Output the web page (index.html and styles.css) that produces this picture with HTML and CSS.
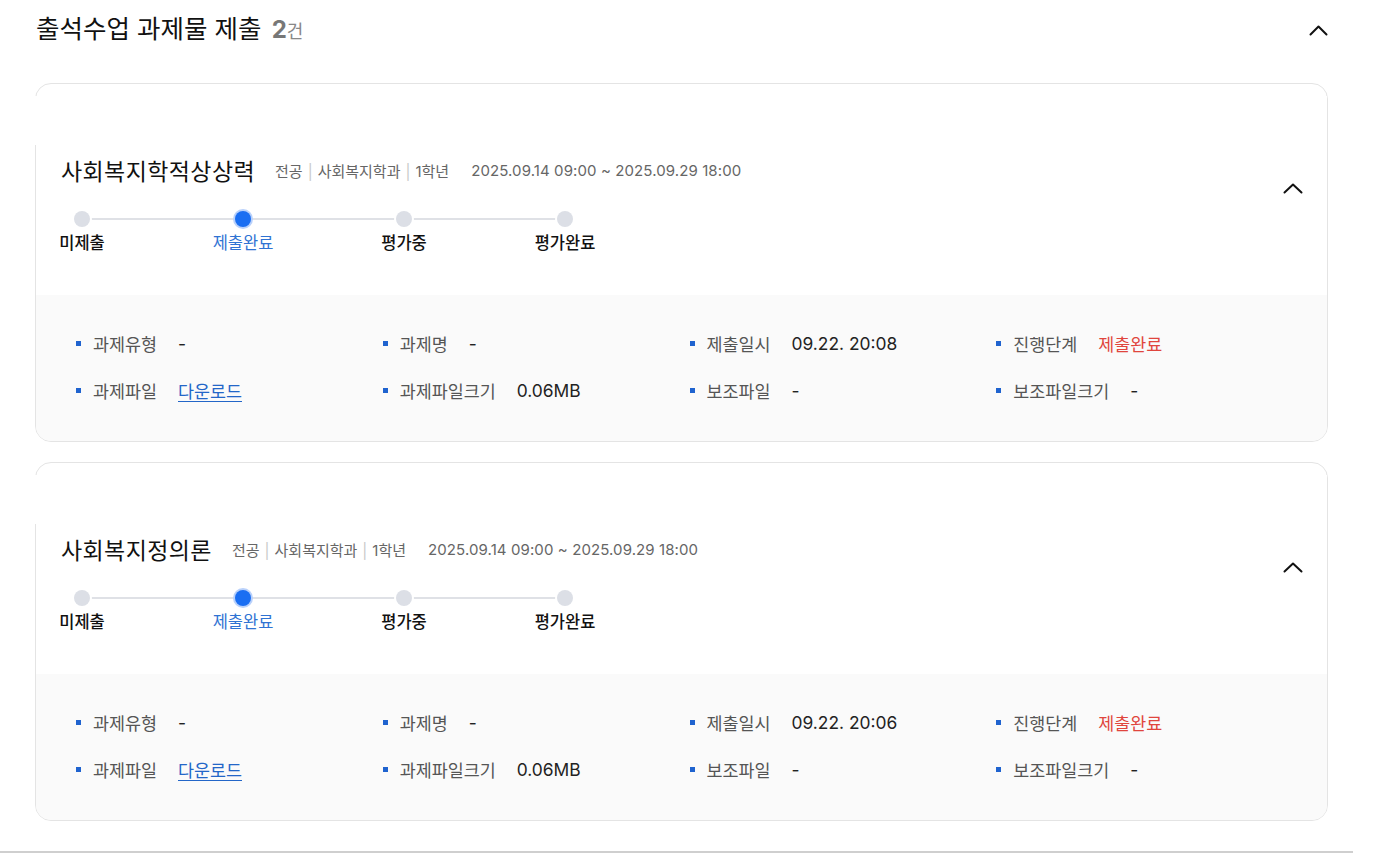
FILE: index.html
```html
<!DOCTYPE html>
<html lang="ko">
<head>
<meta charset="utf-8">
<title>출석수업 과제물 제출</title>
<link rel="stylesheet" href="styles.css">
</head>
<body>
<div class="page">
  <div class="section-head">
    <h2 class="section-title">출석수업 과제물 제출 <span class="count"><b>2</b>건</span></h2>
    <svg class="chev chev-lg" width="19" height="11" viewBox="0 0 19 11"><path d="M1.5 9.5 L9.5 1.5 L17.5 9.5" fill="none" stroke="#111" stroke-width="2" stroke-linecap="round" stroke-linejoin="round"/></svg>
  </div>

  <div class="card">
    <div class="card-spacer"></div>
    <div class="card-head">
      <div class="head-main">
        <div class="title-row">
          <span class="course">사회복지학적상상력</span>
          <span class="meta">전공<i class="sep">|</i>사회복지학과<i class="sep">|</i>1학년</span>
          <span class="meta date">2025.09.14 09:00 ~ 2025.09.29 18:00</span>
        </div>
        <div class="steps">
          <div class="step"><span class="dot"></span><span class="step-label">미제출</span></div>
          <div class="step active"><span class="dot"></span><span class="step-label">제출완료</span></div>
          <div class="step"><span class="dot"></span><span class="step-label">평가중</span></div>
          <div class="step"><span class="dot"></span><span class="step-label">평가완료</span></div>
        </div>
      </div>
      <svg class="chev chev-card" width="20" height="11" viewBox="0 0 20 11"><path d="M1.5 9.5 L10 1.5 L18.5 9.5" fill="none" stroke="#111" stroke-width="2" stroke-linecap="round" stroke-linejoin="round"/></svg>
    </div>
    <div class="detail">
      <div class="item"><span class="bullet"></span><span class="label">과제유형</span><span class="val">-</span></div>
      <div class="item"><span class="bullet"></span><span class="label">과제명</span><span class="val">-</span></div>
      <div class="item"><span class="bullet"></span><span class="label">제출일시</span><span class="val">09.22. 20:08</span></div>
      <div class="item"><span class="bullet"></span><span class="label">진행단계</span><span class="val red">제출완료</span></div>
      <div class="item"><span class="bullet"></span><span class="label">과제파일</span><a class="val link" href="#">다운로드</a></div>
      <div class="item"><span class="bullet"></span><span class="label">과제파일크기</span><span class="val">0.06MB</span></div>
      <div class="item"><span class="bullet"></span><span class="label">보조파일</span><span class="val">-</span></div>
      <div class="item"><span class="bullet"></span><span class="label">보조파일크기</span><span class="val">-</span></div>
    </div>
  </div>

  <div class="card">
    <div class="card-spacer"></div>
    <div class="card-head">
      <div class="head-main">
        <div class="title-row">
          <span class="course">사회복지정의론</span>
          <span class="meta">전공<i class="sep">|</i>사회복지학과<i class="sep">|</i>1학년</span>
          <span class="meta date">2025.09.14 09:00 ~ 2025.09.29 18:00</span>
        </div>
        <div class="steps">
          <div class="step"><span class="dot"></span><span class="step-label">미제출</span></div>
          <div class="step active"><span class="dot"></span><span class="step-label">제출완료</span></div>
          <div class="step"><span class="dot"></span><span class="step-label">평가중</span></div>
          <div class="step"><span class="dot"></span><span class="step-label">평가완료</span></div>
        </div>
      </div>
      <svg class="chev chev-card" width="20" height="11" viewBox="0 0 20 11"><path d="M1.5 9.5 L10 1.5 L18.5 9.5" fill="none" stroke="#111" stroke-width="2" stroke-linecap="round" stroke-linejoin="round"/></svg>
    </div>
    <div class="detail">
      <div class="item"><span class="bullet"></span><span class="label">과제유형</span><span class="val">-</span></div>
      <div class="item"><span class="bullet"></span><span class="label">과제명</span><span class="val">-</span></div>
      <div class="item"><span class="bullet"></span><span class="label">제출일시</span><span class="val">09.22. 20:06</span></div>
      <div class="item"><span class="bullet"></span><span class="label">진행단계</span><span class="val red">제출완료</span></div>
      <div class="item"><span class="bullet"></span><span class="label">과제파일</span><a class="val link" href="#">다운로드</a></div>
      <div class="item"><span class="bullet"></span><span class="label">과제파일크기</span><span class="val">0.06MB</span></div>
      <div class="item"><span class="bullet"></span><span class="label">보조파일</span><span class="val">-</span></div>
      <div class="item"><span class="bullet"></span><span class="label">보조파일크기</span><span class="val">-</span></div>
    </div>
  </div>

  <div class="bottom-rule"></div>
</div>
</body>
</html>
```
FILE: styles.css
```css
* { box-sizing: border-box; }
html, body { margin: 0; padding: 0; background: #fff; }
body {
  font-family: Inter, "Noto Sans CJK KR", "Noto Sans", sans-serif;
  color: #111;
}
.page { width: 1353px; padding-top: 12px; }

.section-head {
  display: flex;
  align-items: center;
  justify-content: space-between;
  height: 36px;
  padding: 0 25px 0 36px;
}
.section-title {
  margin: 0;
  font-size: 25.5px;
  font-weight: 400;
  line-height: 36px;
  color: #111;
}
.count { color: #888; font-size: 18px; }
.count b { font-size: 24px; font-weight: 700; color: #777; margin-left: 3px; }
.chev { display: block; }

.card {
  margin: 35px 0 0 35px;
  width: 1293px;
  border: 1px solid #e4e4e4;
  border-radius: 16px;
}
.card + .card { margin-top: 20px; }
.card-spacer {
  height: 49px;
  margin-top: 12px;
  margin-left: -1px;
  background: #fff;
  position: relative;
}
.card-head {
  display: flex;
  justify-content: space-between;
  align-items: flex-start;
  padding: 10px 24px 0 25px;
  height: 150px;
}
.title-row {
  display: flex;
  align-items: center;
  height: 30px;
  white-space: nowrap;
}
.course { font-size: 23px; color: #111; font-weight: 400; letter-spacing: 0.4px; }
.meta { font-size: 15px; color: #666; margin-left: 20px; }
.sep { font-style: normal; color: #c9c9c9; margin: 0 5px; }
.date { margin-left: 22px; letter-spacing: 0.1px; }

.steps {
  position: relative;
  display: inline-flex;
  gap: 119px;
  margin-top: 26px;
}
.steps::before {
  content: "";
  position: absolute;
  left: 21px;
  right: 21px;
  top: 7px;
  height: 2px;
  background: #dfe1e6;
}
.step {
  position: relative;
  width: 42px;
  display: flex;
  flex-direction: column;
  align-items: center;
}
.dot {
  width: 16px;
  height: 16px;
  border-radius: 50%;
  background: #dcdfe6;
  box-shadow: 0 0 0 2px #fff;
}
.step.active .dot {
  background: #1a6ef2;
  box-shadow: 0 0 0 2px #b9d1fb;
}
.step-label {
  margin-top: 6px;
  font-size: 16.5px;
  line-height: 20px;
  white-space: nowrap;
  color: #111;
  font-weight: 500;
}
.step.active .step-label { color: #2f73d3; font-weight: 400; }
.chev-card { margin-top: 28px; }

.detail {
  background: #fafafa;
  border-radius: 0 0 15px 15px;
  display: grid;
  grid-template-columns: repeat(4, 1fr);
  row-gap: 23px;
  padding: 36px 24px 39px 40px;
}
.item {
  display: flex;
  align-items: center;
  height: 24px;
  font-size: 17.4px;
  white-space: nowrap;
}
.bullet {
  width: 5px;
  height: 5px;
  background: #1f63cf;
  margin-right: 12px;
}
.label { color: #555; margin-right: 21px; }
.val { color: #222; }
.val.red { color: #e0453d; }
.val.link { color: #2366c8; text-decoration: underline; text-underline-offset: 3px; }

.bottom-rule {
  margin-top: 30px;
  height: 2px;
  background: #cfcfcf;
}
```
